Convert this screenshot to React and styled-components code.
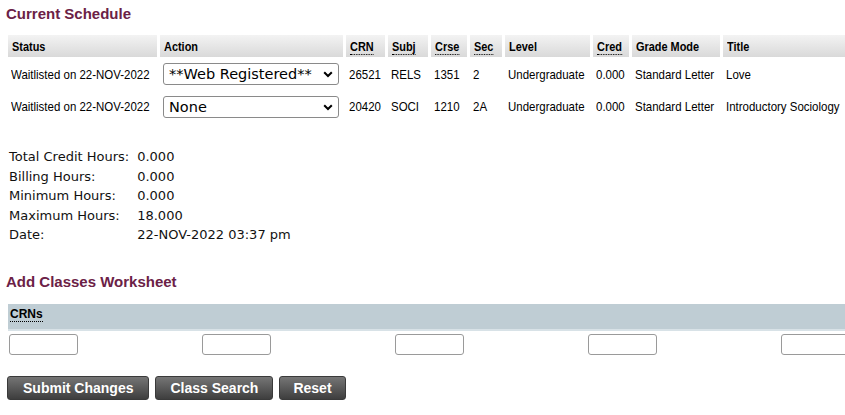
import React from 'react';
import styled, { createGlobalStyle } from 'styled-components';

const GlobalStyle = createGlobalStyle`
  html, body {
    margin: 0;
    padding: 0;
    background: #ffffff;
    overflow: hidden;
  }
  body {
    font-family: "Liberation Sans", Arial, sans-serif;
    color: #000;
  }
`;

const Page = styled.div`
  width: 845px;
  padding-top: 4px;
`;

const SectionTitle = styled.h3`
  margin: 0 0 0 6px;
  height: 20px;
  line-height: 20px;
  font-size: 15px;
  font-weight: bold;
  color: #6b2146;
`;

const ScheduleTable = styled.table`
  margin: 11px 0 0 5px;
  border-collapse: separate;
  border-spacing: 3px 0;
  table-layout: fixed;
  width: 881px;
  font-family: "Liberation Sans", Arial, sans-serif;
  font-size: 13.5px;
`;

/* condensed look: the page uses a narrow sans, squeeze Liberation Sans */
const Narrow = styled.span`
  display: inline-block;
  white-space: nowrap;
  transform: scaleX(${(p) => p.$x || 0.85});
  transform-origin: left center;
`;

const HeadCell = styled.th`
  box-sizing: border-box;
  width: ${(p) => p.$w}px;
  height: 22px;
  padding: 0 4px;
  text-align: left;
  font-weight: bold;
  font-size: 13px;
  background: linear-gradient(#f3f3f3, #d9d9d9);
  white-space: nowrap;
  overflow: hidden;
`;

const Abbr = styled.span`
  border-bottom: 1px dotted #000;
`;

const Row = styled.tr`
  height: 33px;
  &:first-of-type td {
    padding-top: 1px;
  }
`;

const Cell = styled.td`
  box-sizing: border-box;
  padding: 0 3px;
  white-space: nowrap;
  overflow: hidden;
  vertical-align: middle;
`;

const SelectWrap = styled.div`
  position: relative;
  width: 176px;
  height: 22px;
`;

const ActionSelect = styled.select`
  appearance: none;
  width: 176px;
  height: 22px;
  margin: 0;
  padding: 0 20px 0 5px;
  border: 1px solid #8a8a8a;
  border-radius: 3px;
  background: #fff;
  font-family: "DejaVu Sans", Verdana, sans-serif;
  font-size: 14.5px;
  color: #000;
`;

const Chevron = styled.svg`
  position: absolute;
  right: 6px;
  top: 8px;
  width: 10px;
  height: 7px;
  pointer-events: none;
`;

const Stats = styled.div`
  margin: 24px 0 0 9px;
  display: grid;
  grid-template-columns: auto 1fr;
  column-gap: 8px;
  font-family: "DejaVu Sans", Verdana, sans-serif;
  font-size: 13px;
  line-height: 19.5px;
  color: #111;
`;

const WorksheetTitle = styled(SectionTitle)`
  margin-top: 27px;
`;

const CrnBand = styled.div`
  margin: 12px 0 0 8px;
  height: 27px;
  background: #bfcdd4;
  border-bottom: 2px solid #d8e2e7;
  padding: 3px 0 0 2px;
  box-sizing: border-box;
  font-size: 12px;
  font-weight: bold;
`;

const InputRow = styled.div`
  margin: 3px 0 0 9px;
  display: grid;
  grid-template-columns: repeat(5, 193px);
`;

const CrnInput = styled.input`
  display: block;
  width: 69px;
  height: 21px;
  box-sizing: border-box;
  margin: 0;
  border: 1px solid #9a9a9a;
  border-radius: 3px;
  background: #fff;
`;

const ButtonRow = styled.div`
  margin: 21px 0 0 7px;
  display: flex;
  gap: 6px;
`;

const ActionButton = styled.button`
  height: 24px;
  padding: 0 ${(p) => p.$pad || 14}px;
  border: 1px solid #3a3a3a;
  border-radius: 3px;
  background: linear-gradient(#757575, #3e3e3e);
  color: #fff;
  font-family: "Liberation Sans", Arial, sans-serif;
  font-size: 14px;
  font-weight: bold;
  cursor: pointer;
`;

const columns = [
  { label: 'Status', w: 149 },
  { label: 'Action', w: 183 },
  { label: 'CRN', w: 39, abbr: true },
  { label: 'Subj', w: 40, abbr: true },
  { label: 'Crse', w: 36, abbr: true },
  { label: 'Sec', w: 32, abbr: true },
  { label: 'Level', w: 85 },
  { label: 'Cred', w: 36, abbr: true },
  { label: 'Grade Mode', w: 88 },
  { label: 'Title', w: 160 },
];

const rows = [
  {
    status: 'Waitlisted on 22-NOV-2022',
    action: '**Web Registered**',
    crn: '26521',
    subj: 'RELS',
    crse: '1351',
    sec: '2',
    title: 'Love',
  },
  {
    status: 'Waitlisted on 22-NOV-2022',
    action: 'None',
    crn: '20420',
    subj: 'SOCI',
    crse: '1210',
    sec: '2A',
    title: 'Introductory Sociology',
  },
];

const stats = [
  ['Total Credit Hours:', '0.000'],
  ['Billing Hours:', '0.000'],
  ['Minimum Hours:', '0.000'],
  ['Maximum Hours:', '18.000'],
  ['Date:', '22-NOV-2022 03:37 pm'],
];

const App = () => (
  <Page>
    <GlobalStyle />
    <SectionTitle>Current Schedule</SectionTitle>

    <ScheduleTable>
      <thead>
        <tr>
          {columns.map((c) => (
            <HeadCell key={c.label} $w={c.w}>
              <Narrow $x={0.84}>{c.abbr ? <Abbr>{c.label}</Abbr> : c.label}</Narrow>
            </HeadCell>
          ))}
        </tr>
      </thead>
      <tbody>
        {rows.map((r) => (
          <Row key={r.crn}>
            <Cell><Narrow>{r.status}</Narrow></Cell>
            <Cell>
              <SelectWrap>
                <ActionSelect defaultValue={r.action}>
                  <option>{r.action}</option>
                </ActionSelect>
                <Chevron viewBox="0 0 10 7">
                  <path d="M1.2 1.2 L5 5 L8.8 1.2" fill="none" stroke="#000" strokeWidth="2" />
                </Chevron>
              </SelectWrap>
            </Cell>
            <Cell><Narrow>{r.crn}</Narrow></Cell>
            <Cell><Narrow>{r.subj}</Narrow></Cell>
            <Cell><Narrow>{r.crse}</Narrow></Cell>
            <Cell><Narrow>{r.sec}</Narrow></Cell>
            <Cell><Narrow>Undergraduate</Narrow></Cell>
            <Cell><Narrow>0.000</Narrow></Cell>
            <Cell><Narrow>Standard Letter</Narrow></Cell>
            <Cell><Narrow>{r.title}</Narrow></Cell>
          </Row>
        ))}
      </tbody>
    </ScheduleTable>

    <Stats>
      {stats.map(([k, v]) => (
        <React.Fragment key={k}>
          <span>{k}</span>
          <span>{v}</span>
        </React.Fragment>
      ))}
    </Stats>

    <WorksheetTitle>Add Classes Worksheet</WorksheetTitle>
    <CrnBand>
      <Abbr>CRNs</Abbr>
    </CrnBand>
    <InputRow>
      {[0, 1, 2, 3, 4].map((i) => (
        <div key={i}>
          <CrnInput type="text" />
        </div>
      ))}
    </InputRow>

    <ButtonRow>
      <ActionButton $pad={15}>Submit Changes</ActionButton>
      <ActionButton $pad={14}>Class Search</ActionButton>
      <ActionButton $pad={13}>Reset</ActionButton>
    </ButtonRow>
  </Page>
);

export default App;
